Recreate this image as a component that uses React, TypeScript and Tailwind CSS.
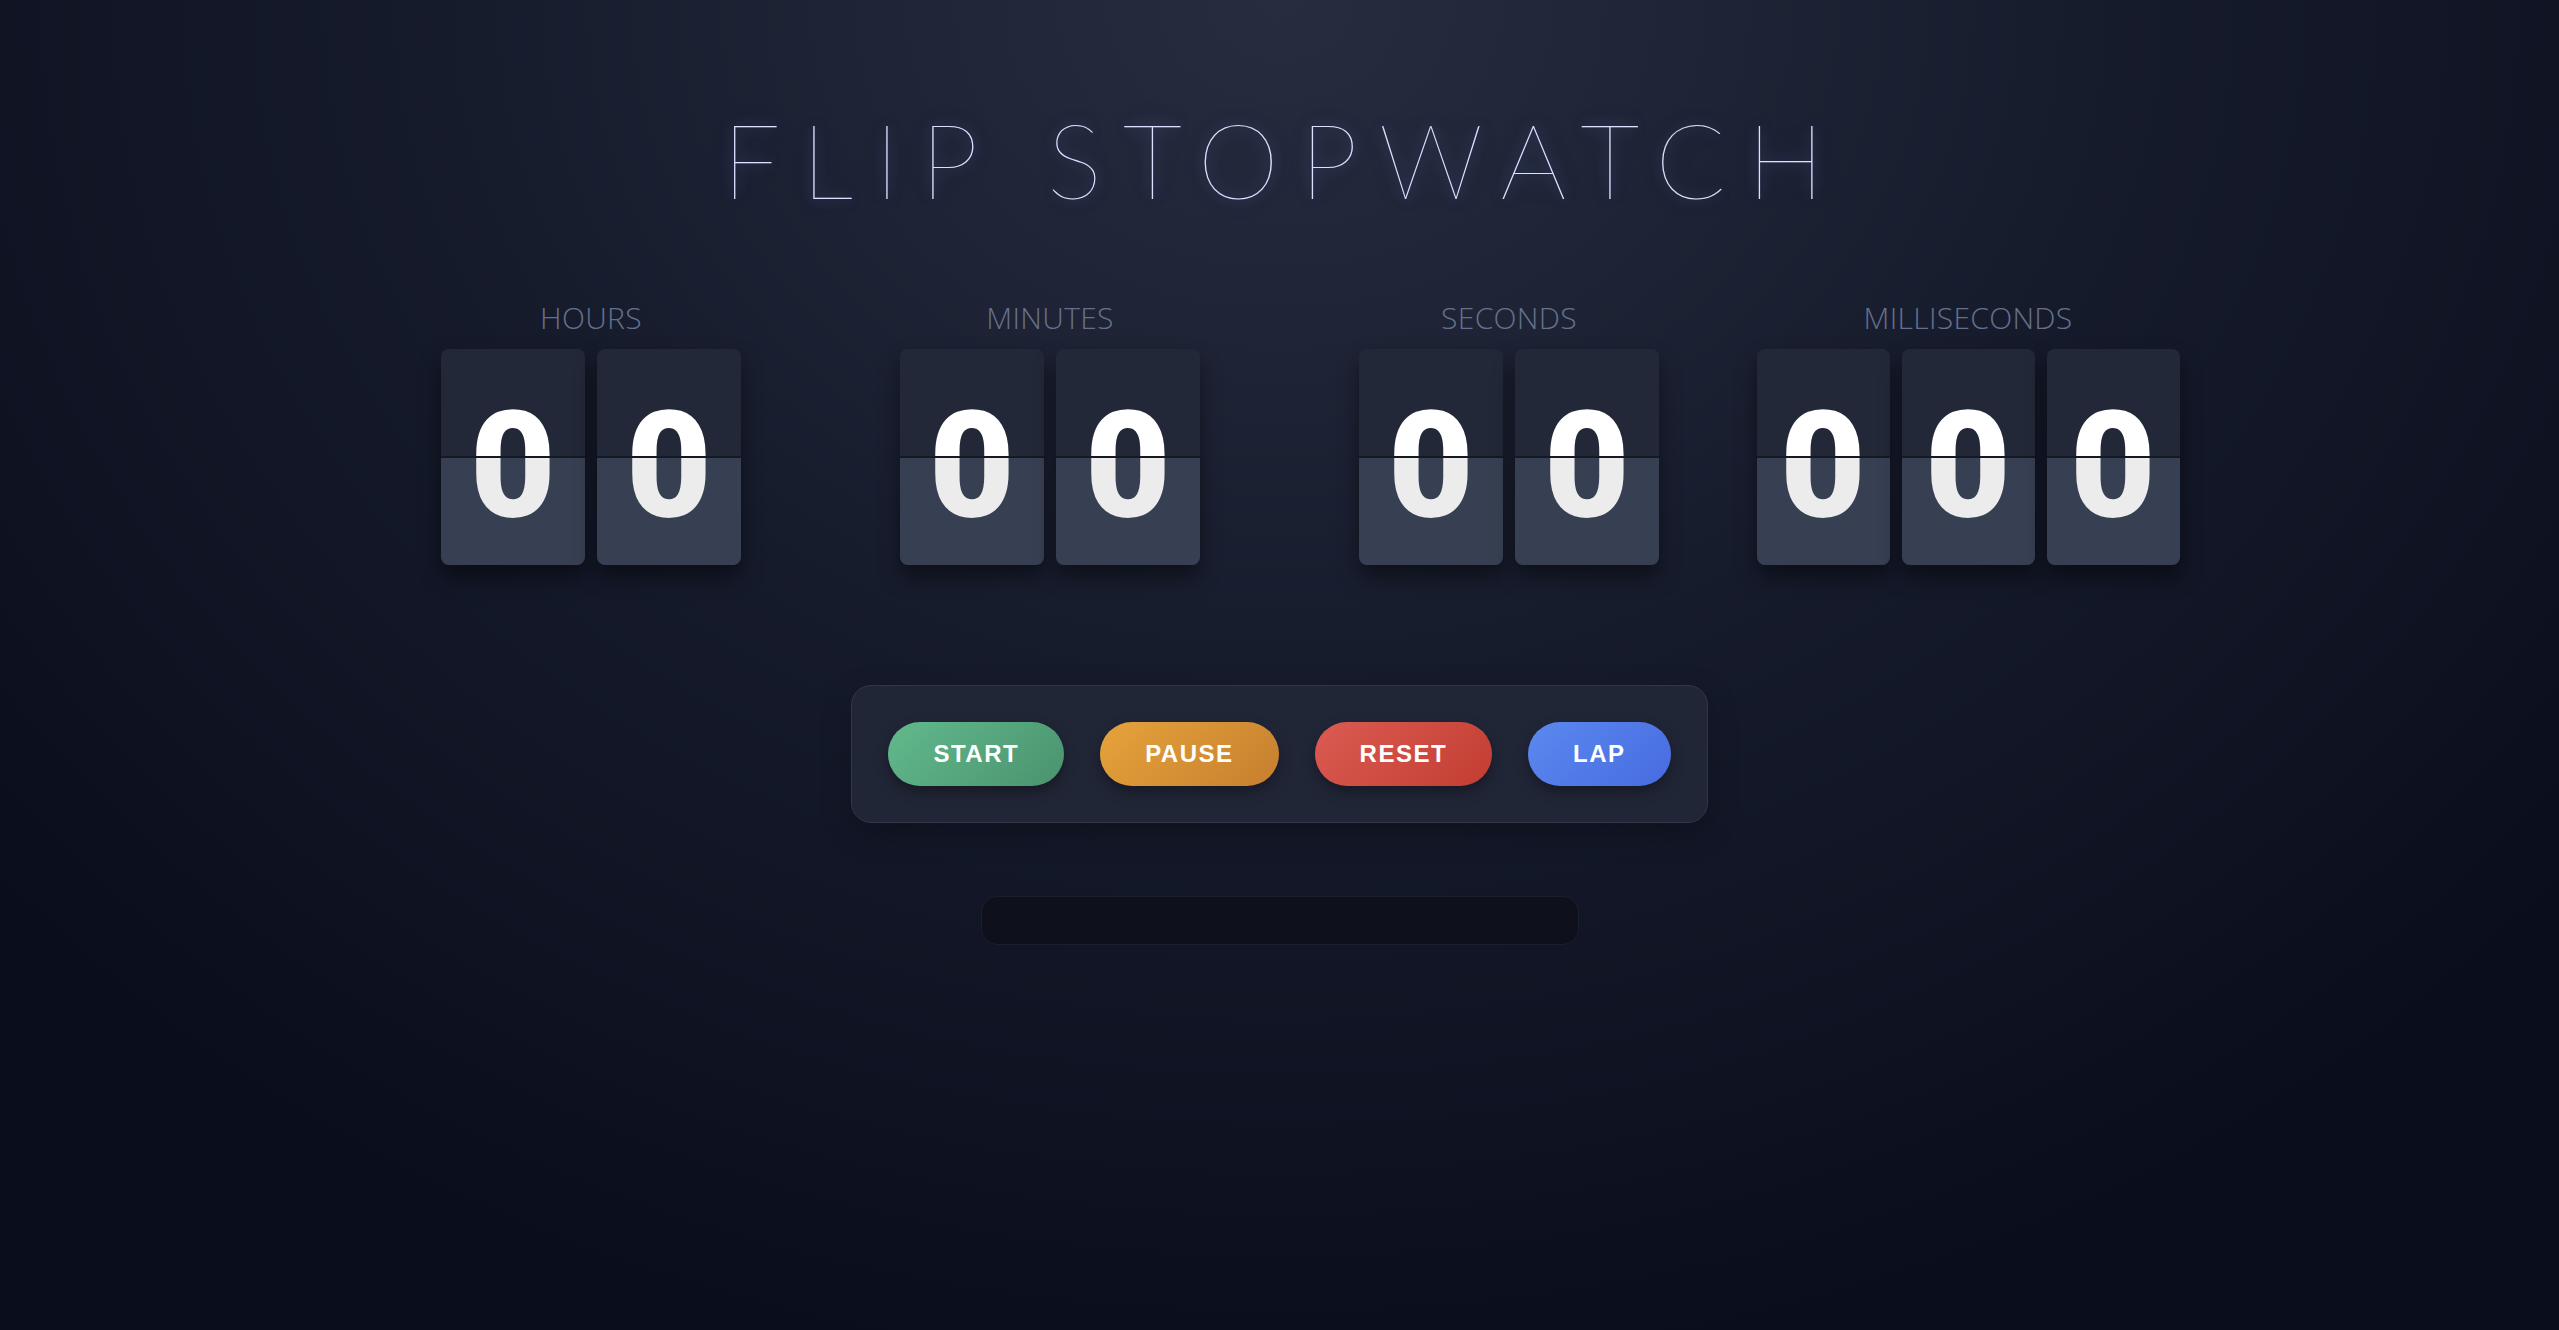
import React from "react";

type Unit = {
  label: string;
  digits: string;
  cardWidth: string;
};

const units: Unit[] = [
  { label: "HOURS", digits: "00", cardWidth: "w-[144px]" },
  { label: "MINUTES", digits: "00", cardWidth: "w-[144px]" },
  { label: "SECONDS", digits: "00", cardWidth: "w-[144px]" },
  { label: "MILLISECONDS", digits: "000", cardWidth: "w-[133px]" },
];

const buttons = [
  { label: "START", cls: "bg-[linear-gradient(135deg,#62b98c,#4a936f)]" },
  { label: "PAUSE", cls: "bg-[linear-gradient(135deg,#e6a33b,#c67f2f)]" },
  { label: "RESET", cls: "bg-[linear-gradient(135deg,#db5b52,#c23d32)]" },
  { label: "LAP", cls: "bg-[linear-gradient(135deg,#5b89ef,#476be0)]" },
];

// One flip tile: dark top leaf, lighter bottom leaf, hinge line across the middle
function FlipCard({ value, width }: { value: string; width: string }) {
  return (
    <div
      className={`relative h-[216px] ${width} overflow-hidden rounded-lg bg-[linear-gradient(180deg,#222837_50%,#373f52_50%)] shadow-[0_12px_22px_rgba(0,0,0,0.45)]`}
    >
      <span
        className="block h-full translate-y-[10px] bg-[linear-gradient(180deg,#ffffff_calc(50%_-_10px),#ececec_calc(50%_-_10px))] bg-clip-text text-center text-[148px] leading-[216px] font-black text-transparent"
        style={{ fontFamily: "Roboto, 'Liberation Sans', sans-serif" }}
      >
        {value}
      </span>
      <div className="absolute inset-x-0 top-[107px] h-[2px] bg-[#151923]" />
    </div>
  );
}

function TimeGroup({ unit }: { unit: Unit }) {
  return (
    <div className="flex flex-col items-center gap-4">
      <div
        className="text-[30px] leading-none font-light tracking-[0.3px] text-[#65718c]"
        style={{ fontFamily: "'Open Sans', sans-serif" }}
      >
        {unit.label}
      </div>
      <div className="flex gap-3">
        {unit.digits.split("").map((d, i) => (
          <FlipCard key={i} value={d} width={unit.cardWidth} />
        ))}
      </div>
    </div>
  );
}

export default function App() {
  return (
    <div className="min-h-screen w-full bg-[#0b0e1c] bg-[radial-gradient(1700px_1400px_at_50%_0%,#272d3f_0%,#161b2c_50%,#0a0d1b_100%)]">
      <div className="flex flex-col items-center pt-[107px] pb-20">
        <h1
          className="pl-[0.08em] text-[104px] leading-none font-thin tracking-[0.2em] text-[#dde0ff] [text-shadow:0_0_14px_rgba(150,165,255,0.45),0_0_30px_rgba(120,140,255,0.25)]"
          style={{ fontFamily: "Lato, 'Open Sans', sans-serif" }}
        >
          FLIP STOPWATCH
        </h1>

        <div className="mt-[92px] grid w-[1836px] grid-cols-4 justify-items-center">
          {units.map((u) => (
            <TimeGroup key={u.label} unit={u} />
          ))}
        </div>

        <div className="mt-[120px] flex gap-9 rounded-[20px] border border-[#313749] bg-[#212637] p-9 shadow-[0_10px_30px_rgba(0,0,0,0.25)]">
          {buttons.map((b) => (
            <button
              key={b.label}
              className={`${b.cls} rounded-full px-[45px] py-5 text-[24px] leading-none font-bold tracking-[1.5px] text-white shadow-[0_6px_14px_rgba(0,0,0,0.35)]`}
              style={{ fontFamily: "'Liberation Sans', Arial, sans-serif" }}
            >
              {b.label}
            </button>
          ))}
        </div>

        <div className="mt-[73px] h-[49px] w-[598px] rounded-2xl border border-[#1b1f2b] bg-[#0e111b]" />
      </div>
    </div>
  );
}
